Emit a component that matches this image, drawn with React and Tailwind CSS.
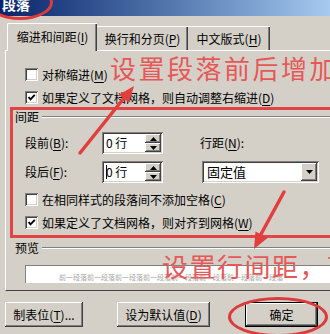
import React from "react";

const raised =
  "shadow-[inset_-1px_-1px_#404040,inset_1px_1px_#ffffff,inset_-2px_-2px_#808080]";
const sunken =
  "shadow-[inset_1px_1px_#808080,inset_-1px_-1px_#ffffff,inset_2px_2px_#404040,inset_-2px_-2px_#d4d0c8]";

function U({ children }) {
  return <span className="underline underline-offset-[2px]">{children}</span>;
}

function Checkbox({ checked }) {
  return (
    <span className={`w-[13px] h-[13px] bg-white shrink-0 flex items-center justify-center ${sunken}`}>
      {checked && (
        <svg width="9" height="9" viewBox="0 0 9 9">
          <path d="M1.5 4 L3.5 6.3 L7.8 1.8" fill="none" stroke="#000" strokeWidth="1.9" />
        </svg>
      )}
    </span>
  );
}

function CheckRow({ checked, children, className = "" }) {
  return (
    <div className={`flex items-center h-[23px] pl-[19px] gap-[4px] ${className}`}>
      <Checkbox checked={checked} />
      <span className="whitespace-nowrap">{children}</span>
    </div>
  );
}

function Arrow({ up }) {
  return (
    <div className={`flex-1 bg-[#d4d0c8] flex items-center justify-center ${raised}`}>
      <svg width="7" height="4" viewBox="0 0 7 4">
        {up ? <path d="M0 4 L3.5 0 L7 4 Z" fill="#000" /> : <path d="M0 0 L3.5 4 L7 0 Z" fill="#000" />}
      </svg>
    </div>
  );
}

function Spin({ caret }) {
  return (
    <div className={`flex w-[61px] h-[22px] bg-white p-[2px] ${sunken}`}>
      <span className="flex-1 flex items-center pl-[2px] leading-[16px]">
        {caret && <span className="w-px h-[14px] bg-black -mr-[1px]" />}
        <span>0 行</span>
      </span>
      <div className="flex flex-col w-[16px]">
        <Arrow up />
        <Arrow />
      </div>
    </div>
  );
}

function GroupLabel({ children, className = "" }) {
  return (
    <div className={`flex items-center h-[16px] pl-[9px] ${className}`}>
      <span className="whitespace-nowrap pr-[3px]">{children}</span>
      <div className="flex-1 border-t border-[#808080] border-b-white border-b h-[2px]" />
    </div>
  );
}

function Button({ children, width, isDefault, className = "" }) {
  return (
    <div
      className={`h-[25px] flex items-center justify-center bg-[#d4d0c8] ${
        isDefault ? "border border-black " + raised : raised
      } ${width} ${className}`}
    >
      {children}
    </div>
  );
}

export default function App() {
  return (
    <div
      className="relative w-[330px] h-[334px] overflow-hidden bg-[#d4d0c8] text-[12px] text-black leading-[14px] flex flex-col"
      style={{ fontFamily: '"Noto Sans CJK SC", "Liberation Sans", sans-serif' }}
    >
      {/* title bar */}
      <div className="h-[16px] shrink-0 bg-gradient-to-r from-[#0a246a] to-[#a6caf0] overflow-hidden">
        <div className="text-white font-bold text-[14px] leading-[14px] -mt-[3px] pl-[2px]">段落</div>
      </div>

      {/* tabs */}
      <div className="flex items-end h-[28px] mt-[7px] pl-[7px] relative z-10 -mb-px">
        <div className="w-[90px] h-[28px] bg-[#d4d0c8] border-t border-l border-white rounded-tl-[2px] shadow-[inset_-1px_0_#404040,inset_-2px_0_#808080] flex items-center justify-center pb-[2px]">
          缩进和间距(<U>I</U>)
        </div>
        <div className="w-[91px] h-[24px] mb-px border-t border-white shadow-[inset_-1px_0_#404040,inset_-2px_0_#808080] flex items-center justify-center">
          换行和分页(<U>P</U>)
        </div>
        <div className="w-[82px] h-[24px] mb-px border-t border-white shadow-[inset_-1px_0_#404040,inset_-2px_0_#808080] flex items-center justify-center">
          中文版式(<U>H</U>)
        </div>
      </div>

      {/* tab panel */}
      <div className="ml-[5px] border-t border-l border-white border-b border-b-[#404040] flex flex-col pb-[7px]">
        <CheckRow className="mt-[12px]">
          对称缩进(<U>M</U>)
        </CheckRow>
        <CheckRow checked>
          如果定义了文档网格，则自动调整右缩进(<U>D</U>)
        </CheckRow>

        <GroupLabel>间距</GroupLabel>

        <div className="flex items-center h-[22px] mt-[7px] pl-[19px]">
          <span className="w-[77px]">
            段前(<U>B</U>):
          </span>
          <Spin />
          <span className="ml-[37px]">
            行距(<U>N</U>):
          </span>
        </div>
        <div className="flex items-center h-[22px] mt-[7px] pl-[19px]">
          <span className="w-[77px]">
            段后(<U>F</U>):
          </span>
          <Spin caret />
          <div className={`ml-[39px] w-[117px] h-[22px] bg-white p-[2px] flex ${sunken}`}>
            <span className="flex-1 flex items-center pl-[3px] text-[13px]">固定值</span>
            <div className={`w-[16px] bg-[#d4d0c8] flex items-center justify-center ${raised}`}>
              <svg width="7" height="4" viewBox="0 0 7 4">
                <path d="M0 0 L3.5 4 L7 0 Z" fill="#000" />
              </svg>
            </div>
          </div>
        </div>

        <CheckRow className="mt-[5px]">
          在相同样式的段落间不添加空格(<U>C</U>)
        </CheckRow>
        <CheckRow checked>
          如果定义了文档网格，则对齐到网格(<U>W</U>)
        </CheckRow>

        <GroupLabel className="mt-[6px]">预览</GroupLabel>

        <div className="ml-[19px] mt-[9px] h-[18px] bg-white border-t border-l border-[#808080] overflow-hidden">
          <div className="pl-[33px] pt-[7px] text-[7px] leading-[8px] text-[#a8a8a8] whitespace-nowrap">
            前一段落前一段落前一段落前一段落前一段落前一段落前一段落前一段落
          </div>
        </div>
      </div>

      {/* buttons */}
      <div className="flex mt-[11px]">
        <Button width="w-[78px]" className="ml-[5px]">
          制表位(<U>T</U>)...
        </Button>
        <Button width="w-[93px]" className="ml-[34px]">
          设为默认值(<U>D</U>)
        </Button>
        <Button width="w-[73px]" className="ml-[35px]" isDefault>
          确定
        </Button>
      </div>

      {/* red annotations */}
      <div className="absolute left-[-13px] top-[-15px] w-[66px] h-[35px] rounded-[50%] border-[3px] border-[#dc3b3c]" />
      <div className="absolute left-[228px] top-[297px] w-[100px] h-[40px] rounded-[50%] border-[3px] border-[#dc3b3c]" />
      <div className="absolute left-[10px] top-[107px] w-[340px] h-[131px] border-[3px] border-[#e04444]" />
      <div className="absolute left-[110px] top-[53px] text-[26px] leading-[30px] tracking-[2.5px] text-[#e65858] whitespace-nowrap">
        设置段落前后增加
      </div>
      <div className="absolute left-[162px] top-[251px] text-[26px] leading-[30px] tracking-[1.5px] text-[#e65858] whitespace-nowrap">
        设置行间距，可
      </div>
      <svg className="absolute left-0 top-0 pointer-events-none" width="330" height="334" viewBox="0 0 330 334">
        <path d="M80 153 L124 98" stroke="#e23e3e" strokeWidth="3.5" strokeLinecap="round" />
        <path d="M134 86 L129 103 L119 94.5 Z" fill="#e23e3e" />
        <path d="M284 192 L260 236" stroke="#e23e3e" strokeWidth="3.5" strokeLinecap="round" />
        <path d="M254 249 L267.5 238 L255.5 231.5 Z" fill="#e23e3e" />
      </svg>
    </div>
  );
}
